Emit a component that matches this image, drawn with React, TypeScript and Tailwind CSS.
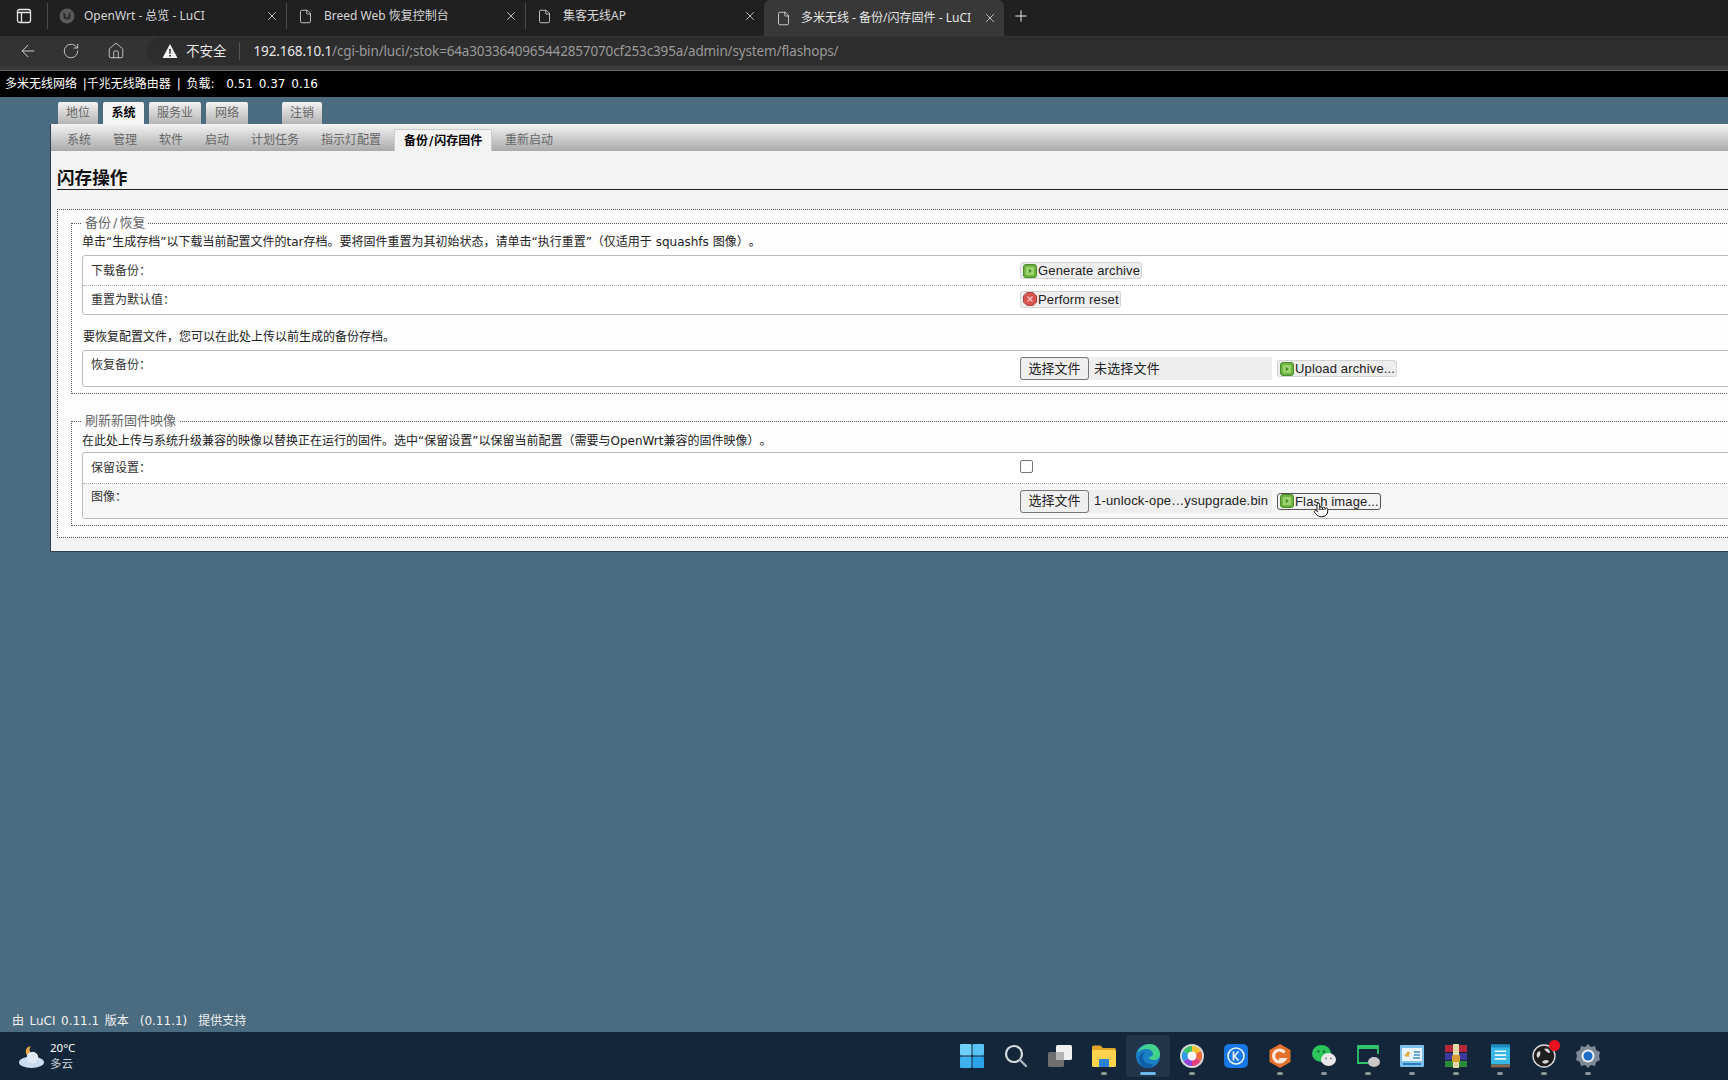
import React from 'react';
import { ArrowLeft, RotateCw, House, X, Plus, File, Pointer } from 'lucide-react';

const ui = "font-['Noto_Sans','Noto_Sans_CJK_SC',sans-serif]";
const page = "font-['DejaVu_Sans','Noto_Sans_CJK_SC',sans-serif]";
const arial = "font-['Liberation_Sans','Noto_Sans_CJK_SC',sans-serif]";

const browserTabs = [
  { title: 'OpenWrt - 总览 - LuCI', fav: true },
  { title: 'Breed Web 恢复控制台' },
  { title: '集客无线AP' },
];

const GreenIcon = () => (
  <svg viewBox="0 0 14 14" className="w-[14px] h-[14px] shrink-0">
    <rect x="0.5" y="0.5" width="13" height="13" rx="2.5" fill="#6db33f" stroke="#4b8a2a" />
    <rect x="3" y="3" width="8" height="8" rx="1" fill="#9ed46f" />
    <path d="M5.8 4.8 L8.8 7 L5.8 9.2 Z" fill="#3f8a2a" />
  </svg>
);

const RedIcon = () => (
  <svg viewBox="0 0 14 14" className="w-[14px] h-[14px] shrink-0">
    <path d="M4 .5h6L13.5 4v6L10 13.5H4L.5 10V4Z" fill="#d9534f" stroke="#a94442" />
    <path d="M4.5 4.5l5 5M9.5 4.5l-5 5" stroke="#f4c4c2" strokeWidth="1.3" />
  </svg>
);

const ActionBtn = ({ label, red, hover, children }: { label: string; red?: boolean; hover?: boolean; children?: React.ReactNode }) => (
  <div className={`relative inline-flex items-center h-[17px] pl-[2px] pr-[1px] gap-[1px] rounded-[3px] border text-[13px] leading-none tracking-[0.15px] text-[#222] ${arial} ${hover ? 'bg-[#f3f3f3] border-[#555]' : 'bg-[#eeeeee] border-[#d4d4d4]'}`}>
    {red ? <RedIcon /> : <GreenIcon />}
    <span>{label}</span>
    {children}
  </div>
);

const FileInput = ({ value }: { value: string }) => (
  <div className={`flex items-center h-[23px] w-[252px] bg-[#eeeeee] text-[13px] text-[#222] ${arial}`}>
    <div className="w-[69px] h-full flex items-center justify-center bg-[#efefef] border border-[#767676] rounded-[3px] text-[13px]">选择文件</div>
    <span className="pl-[5px] truncate tracking-[0.17px]">{value}</span>
  </div>
);

const Row = ({ label, h, dotted, bg, pt, children }: { label: string; h: string; dotted?: boolean; bg?: string; pt?: string; children: React.ReactNode }) => (
  <div className={`flex ${h} ${bg ?? ''} ${dotted ? 'border-b border-dotted border-[#aaa]' : ''}`}>
    <div className={`w-[937px] pl-[8px] text-[12px] leading-[18px] text-[#333] ${pt ?? 'pt-[6px]'}`}>{label}</div>
    <div className="flex-1 flex items-center gap-[5px]">{children}</div>
  </div>
);

const Table = ({ children }: { children: React.ReactNode }) => (
  <div className="ml-[10px] bg-white border border-[#bbbbbb] rounded-[3px]">{children}</div>
);

const Legend = ({ children }: { children: React.ReactNode }) => (
  <legend className="ml-[10px] px-[3px] h-[18px] text-[13px] leading-[18px] text-[#666]">{children}</legend>
);

const Tb = ({ children, dot = true, active }: { children: React.ReactNode; dot?: boolean; active?: boolean }) => (
  <div className={`relative w-[44px] h-[42px] flex items-center justify-center rounded-[4px] ${active ? 'bg-[#22344a]' : ''}`}>
    {children}
    {dot && <div className={`absolute bottom-[2px] left-1/2 -translate-x-1/2 h-[3px] rounded-full ${active ? 'w-[16px] bg-[#6cb8e6]' : 'w-[6px] bg-[#8c949c]'}`} />}
  </div>
);

const sub = ['系统', '管理', '软件', '启动', '计划任务', '指示灯配置'];

export default function App() {
  return (
    <div className={`h-screen w-full overflow-hidden flex flex-col bg-[#4b6b80] ${page}`}>
      {/* browser chrome */}
      <div className={`h-9 bg-[#202020] flex items-start shrink-0 text-[#d6d6d6] ${ui}`}>
        <div className="w-[47px] h-8 flex items-center justify-center">
          <svg viewBox="0 0 16 16" className="w-4 h-4" fill="none" stroke="#e6e6e6" strokeWidth="1.3">
            <rect x="1.5" y="1.5" width="13" height="13" rx="2" />
            <path d="M1.5 4.5h13M5.5 4.5v10" />
          </svg>
        </div>
        {browserTabs.map((t) => (
          <div key={t.title} className="w-[239px] flex items-center border-l border-[#4a4a4a] mt-[3px] h-[26px] pl-[11px] pr-[7px] text-[12px]">
            {t.fav ? (
              <svg viewBox="0 0 16 16" className="w-4 h-4 shrink-0">
                <circle cx="8" cy="8" r="7.5" fill="#5a5a5a" />
                <path d="M4.5 4v4a3.5 3.5 0 0 0 7 0V4l-2 2v2a1.5 1.5 0 0 1-3 0V6Z" fill="#2a2a2a" />
              </svg>
            ) : (
              <File size={15} strokeWidth={1.3} className="shrink-0 text-[#e0e0e0]" />
            )}
            <span className={`flex-1 truncate ${t.fav ? 'pl-[9px]' : 'pl-[11px]'}`}>{t.title}</span>
            <X size={14} strokeWidth={1.4} className="text-[#ddd] shrink-0" />
          </div>
        ))}
        <div className="w-[240px] h-9 bg-[#383838] rounded-t-[6px] flex items-center pl-[12px] pr-[7px] text-[12px] text-[#e6e6e6]">
          <File size={15} strokeWidth={1.3} className="shrink-0" />
          <span className="pl-[10px] flex-1 truncate">多米无线 - 备份/闪存固件 - LuCI</span>
          <X size={14} strokeWidth={1.4} className="shrink-0" />
        </div>
        <div className="ml-[8px] h-8 flex items-center">
          <Plus size={18} strokeWidth={1.3} className="text-[#eee]" />
        </div>
      </div>

      <div className={`h-[35px] shrink-0 bg-[#333333] border-b border-[#666] text-[#d0d0d0] ${ui}`}>
        <div className="h-[30px] flex items-center">
          <ArrowLeft size={20} strokeWidth={1.2} className="ml-[18px]" />
          <RotateCw size={18} strokeWidth={1.2} className="ml-[24px]" />
          <House size={18} strokeWidth={1.2} className="ml-[27px]" />
          <div className="ml-[22px] h-[28px] flex-1 rounded-l-full bg-[#2d2d2d] flex items-center pl-[15px] text-[13.5px]">
            <svg viewBox="0 0 16 16" className="w-4 h-4 shrink-0">
              <path d="M8 1 15.5 15H.5Z" fill="#f2f2f2" />
              <path d="M7.2 6h1.6l-.2 5H7.4ZM7.2 12h1.6v1.5H7.2Z" fill="#2a2a2a" />
            </svg>
            <span className="ml-[8px] text-[#e6e6e6]">不安全</span>
            <div className="ml-[12px] w-px h-[18px] bg-[#555]" />
            <span className="ml-[14px] text-[#e8e8e8] tracking-[-0.15px]">192.168.10.1</span>
            <span className="text-[#9a9a9a] tracking-[-0.15px]">/cgi-bin/luci/;stok=64a3033640965442857070cf253c395a/admin/system/flashops/</span>
          </div>
        </div>
        <div className="h-1 bg-[#3b3b3b]" />
      </div>

      {/* router page header */}
      <div className="h-[26px] shrink-0 bg-black text-white text-[12px] flex items-center pl-[5px] whitespace-pre [word-spacing:2px]">
        多米无线网络 |千兆无线路由器 | 负载:  0.51 0.37 0.16
      </div>

      <div className="flex-1 flex flex-col min-h-0">
        <div className="pt-[5px] pl-[58px] flex h-[27px] shrink-0 text-[12px] text-[#666]">
          {[['地位', 'w-[40px]'], ['系统', 'w-[41px]'], ['服务业', 'w-[52px]'], ['网络', 'w-[42px]']].map(([t, w]) => (
            <div key={t} className={`${w} mr-[5px] h-[22px] flex items-center justify-center rounded-t-[2px] ${t === '系统' ? 'bg-[#f5f5f5] text-black font-bold' : 'bg-gradient-to-b from-[#f2f2f2] to-[#b4b4b4]'}`}>{t}</div>
          ))}
          <div className="ml-[29px] w-[40px] h-[22px] flex items-center justify-center rounded-t-[2px] bg-gradient-to-b from-[#f2f2f2] to-[#b4b4b4]">注销</div>
        </div>

        <div className="ml-[50px] w-[1760px] h-[428px] shrink-0 bg-[#f3f3f3] border-l border-b border-[#2e3e4a]">
          <div className="h-[27px] bg-gradient-to-b from-[#f4f4f4] to-[#aaaaaa] flex items-end pl-[16px] text-[12px] text-[#666]">
            {sub.map((s) => (
              <div key={s} className="h-[23px] flex items-center mr-[22px]">{s}</div>
            ))}
            <div className="h-[22px] -ml-[9px] w-[98px] flex items-center justify-center bg-[#f3f3f3] border-t border-x border-[#ccc] font-bold text-black">备份<span className="mx-[1px]">/</span>闪存固件</div>
            <div className="h-[23px] flex items-center ml-[13px]">重新启动</div>
          </div>

          <div className="pl-[6px]">
            <h2 className="h-[39px] pt-[15px] border-b border-[#222] text-[17.6px] leading-[24px] font-bold text-[#111]">闪存操作</h2>

            <div className="mt-[19px] border border-dotted border-[#555] bg-[#fdfdfd] pl-[13px] pt-[4px] h-[329px]">
              <fieldset className="border border-dotted border-[#555]">
                <Legend>备份<span className="mx-[2px]">/</span>恢复</Legend>
                <p className="ml-[10px] mt-[1px] text-[12px] leading-[18px] text-[#222] [text-spacing-trim:space-all]">单击“生成存档”以下载当前配置文件的tar存档。要将固件重置为其初始状态，请单击“执行重置”（仅适用于 squashfs 图像）。</p>
                <div className="mt-[4px]">
                  <Table>
                    <Row label="下载备份：" h="h-[30px]" dotted>
                      <ActionBtn label="Generate archive" />
                    </Row>
                    <Row label="重置为默认值：" h="h-[28px]" pt="pt-[5px]">
                      <div className="flex mb-[2px]">
                        <ActionBtn label="Perform reset" red />
                      </div>
                    </Row>
                  </Table>
                </div>
                <p className="ml-[11px] mt-[13px] mb-[4px] text-[12px] leading-[18px] text-[#222]">要恢复配置文件，您可以在此处上传以前生成的备份存档。</p>
                <Table>
                  <Row label="恢复备份：" h="h-[35px]" pt="pt-[5px]">
                    <FileInput value="未选择文件" />
                    <ActionBtn label="Upload archive..." />
                  </Row>
                </Table>
                <div className="h-[6px]" />
              </fieldset>

              <fieldset className="mt-[18px] border border-dotted border-[#555]">
                <Legend>刷新新固件映像</Legend>
                <p className="ml-[10px] mt-[2px] text-[12px] leading-[18px] text-[#222] [text-spacing-trim:space-all]">在此处上传与系统升级兼容的映像以替换正在运行的固件。选中“保留设置”以保留当前配置（需要与OpenWrt兼容的固件映像）。</p>
                <div className="mt-[2px]">
                  <Table>
                    <Row label="保留设置：" h="h-[31px]" dotted>
                      <div className="w-[13px] h-[13px] mb-[3px] bg-white border border-[#767676] rounded-[2px]" />
                    </Row>
                    <Row label="图像：" h="h-[34px]" bg="bg-[#f7f7f7]" pt="pt-[4px]">
                      <FileInput value="1-unlock-ope…ysupgrade.bin" />
                      <ActionBtn label="Flash image..." hover>
                        <Pointer size={16} strokeWidth={1.3} fill="#fff" className="absolute left-[35px] top-[8px] text-black" />
                      </ActionBtn>
                    </Row>
                  </Table>
                </div>
                <div className="h-[6px]" />
              </fieldset>
            </div>
          </div>
        </div>

        <div className="mt-auto h-[26px] shrink-0 pl-[12px] flex items-end text-[12px] text-[#f0f0f0] whitespace-pre [word-spacing:1.7px]">
          <span className="pb-[2px]">由 LuCI 0.11.1 版本  (0.11.1)  提供支持</span>
        </div>
      </div>

      {/* windows taskbar */}
      <div className={`h-12 shrink-0 bg-[#14273a] flex items-center text-white ${ui}`}>
        <div className="w-[950px] shrink-0 flex items-center pl-[18px]">
          <svg viewBox="0 0 28 26" className="w-[27px] h-[25px]">
            <circle cx="14" cy="8" r="6" fill="#e9a94a" />
            <circle cx="17" cy="6" r="5" fill="#14273a" />
            <ellipse cx="14" cy="19" rx="13" ry="6" fill="#c9dcf0" />
            <circle cx="15" cy="14" r="6" fill="#dfeaf6" />
          </svg>
          <div className="ml-[5px] text-[11.5px] leading-[16px]">
            <div>20°C</div>
            <div className="text-[#c8d0d8]">多云</div>
          </div>
        </div>
        <Tb dot={false}>
          <svg viewBox="0 0 24 24" className="w-6 h-6">
            <rect x="0" y="0" width="11.5" height="11.5" rx="1" fill="#6fd0fa" />
            <rect x="12.5" y="0" width="11.5" height="11.5" rx="1" fill="#58c2f5" />
            <rect x="0" y="12.5" width="11.5" height="11.5" rx="1" fill="#3fb0ee" />
            <rect x="12.5" y="12.5" width="11.5" height="11.5" rx="1" fill="#2ba3e8" />
          </svg>
        </Tb>
        <Tb dot={false}>
          <svg viewBox="0 0 24 24" className="w-6 h-6" fill="none">
            <circle cx="10" cy="10" r="8" stroke="#d8dde2" strokeWidth="2.2" />
            <path d="M16 16l6 6" stroke="#aab2ba" strokeWidth="2.4" strokeLinecap="round" />
          </svg>
        </Tb>
        <Tb dot={false}>
          <svg viewBox="0 0 24 24" className="w-6 h-6">
            <rect x="0" y="8" width="16" height="15" rx="1.5" fill="#6e6e6e" />
            <rect x="8" y="1" width="16" height="15" rx="1.5" fill="#f0f0f0" />
            <rect x="8" y="8" width="8" height="8" fill="#b4b4b4" />
          </svg>
        </Tb>
        <Tb>
          <svg viewBox="0 0 24 24" className="w-6 h-6">
            <path d="M0 3a1.5 1.5 0 0 1 1.5-1.5h7L11 4h11.5A1.5 1.5 0 0 1 24 5.5V8H0Z" fill="#e0a52a" />
            <rect x="0" y="6" width="24" height="17" rx="1.5" fill="#fbd34d" />
            <rect x="7" y="15" width="10" height="8" rx="1" fill="#2b7fd4" />
          </svg>
        </Tb>
        <Tb active>
          <svg viewBox="0 0 24 24" className="w-6 h-6">
            <circle cx="12" cy="12" r="12" fill="#1b7fc4" />
            <path d="M1 10C3 3 9 0 14 0c6 0 10 5 10 10 0 4-3 6-6 6-3 0-5-1-5-3 2 0 4-1 4-3 0-3-3-5-7-5-4 0-8 2-9 5Z" fill="#43d28e" />
            <path d="M13 24c-6 0-10-4-10-10 0-3 3-6 6-6 1 0-3 2-2 6 1 5 6 7 10 6-1 2-2 4-4 4Z" fill="#0f5ea8" />
          </svg>
        </Tb>
        <Tb>
          <svg viewBox="0 0 24 24" className="w-6 h-6">
            <circle cx="12" cy="12" r="12" fill="#d8d8d8" />
            <path d="M12 2a10 10 0 0 1 8.7 5L12 12Z" fill="#f4c430" />
            <path d="M20.7 7a10 10 0 0 1 0 10L12 12Z" fill="#f06a3a" />
            <path d="M20.7 17A10 10 0 0 1 12 22V12Z" fill="#e43d7a" />
            <path d="M12 22a10 10 0 0 1-8.7-5L12 12Z" fill="#8f45d8" />
            <path d="M3.3 17a10 10 0 0 1 0-10L12 12Z" fill="#2e9be8" />
            <path d="M3.3 7A10 10 0 0 1 12 2v10Z" fill="#3fc465" />
            <circle cx="12" cy="12" r="4.5" fill="#fff" />
          </svg>
        </Tb>
        <Tb dot={false}>
          <svg viewBox="0 0 24 24" className="w-6 h-6">
            <rect width="24" height="24" rx="5" fill="#1677e6" />
            <circle cx="12" cy="12" r="8" fill="none" stroke="#e8f2fc" strokeWidth="1.6" />
            <path d="M9.5 7.5v9M14.5 7.5l-4 4.5 4 4.5" fill="none" stroke="#e8f2fc" strokeWidth="1.8" />
          </svg>
        </Tb>
        <Tb>
          <svg viewBox="0 0 24 24" className="w-6 h-6">
            <path d="M12 0l10.5 6v12L12 24 1.5 18V6Z" fill="#e2702a" />
            <path d="M16.5 8.5A6 6 0 1 0 16.5 15.5H11" fill="none" stroke="#fbe8da" strokeWidth="3.2" />
          </svg>
        </Tb>
        <Tb>
          <svg viewBox="0 0 24 24" className="w-6 h-6">
            <ellipse cx="9.5" cy="9.5" rx="9.5" ry="8.5" fill="#2dc45a" />
            <ellipse cx="16.5" cy="15.5" rx="7.5" ry="6.5" fill="#e8e8e8" />
            <circle cx="6.5" cy="7.5" r="1.2" fill="#14733a" />
            <circle cx="12" cy="7.5" r="1.2" fill="#14733a" />
            <circle cx="14" cy="14.5" r="1" fill="#888" />
            <circle cx="19" cy="14.5" r="1" fill="#888" />
          </svg>
        </Tb>
        <Tb>
          <svg viewBox="0 0 24 24" className="w-6 h-6" fill="none">
            <path d="M12 19H2V2h20v8" stroke="#2fc46a" strokeWidth="1.8" />
            <path d="M2 2h20v3H2Z" fill="#2fc46a" />
            <ellipse cx="18" cy="18" rx="6" ry="5" fill="#c8c8c8" />
          </svg>
        </Tb>
        <Tb>
          <svg viewBox="0 0 24 24" className="w-6 h-6">
            <rect x="0" y="1" width="24" height="22" rx="1" fill="#7cc0ea" />
            <rect x="2" y="4" width="20" height="13" fill="#e8f4fb" />
            <path d="M4 12l4-5 3 3h-2v3Z" fill="#e0b040" />
            <path d="M14 8h6M14 11h6M13 14h7" stroke="#3c8ccc" strokeWidth="1.6" />
            <rect x="3" y="19" width="18" height="2" fill="#2c7cbc" />
          </svg>
        </Tb>
        <Tb>
          <svg viewBox="0 0 24 24" className="w-6 h-6">
            <rect x="1" y="1" width="22" height="7" fill="#b8263a" />
            <rect x="1" y="9" width="22" height="7" fill="#3c3a9a" />
            <rect x="1" y="17" width="22" height="6" fill="#2c8a3a" />
            <rect x="9" y="0" width="6" height="24" fill="#e6d9a8" />
            <rect x="8" y="11" width="8" height="7" rx="1" fill="#d8a030" />
          </svg>
        </Tb>
        <Tb>
          <svg viewBox="0 0 20 24" className="w-[19px] h-6">
            <rect x="0" y="0" width="20" height="21" fill="#38b6e6" />
            <path d="M0 0h20v3H0Z" fill="#1b8cc0" />
            <path d="M4 7h12M4 11h12M4 15h12" stroke="#e8f7fd" strokeWidth="1.8" />
            <rect x="0" y="21" width="20" height="3" fill="#8a6a4a" />
          </svg>
        </Tb>
        <Tb>
          <div className="relative">
            <svg viewBox="0 0 24 24" className="w-6 h-6" fill="none">
              <circle cx="12" cy="12" r="11" fill="#1e1e1e" stroke="#d8d8d8" strokeWidth="1.4" />
              <path d="M12 5a4 4 0 0 1 6 4c-3 0-4-2-6-4ZM6 14a4 4 0 0 1 2-7c1 3 0 5-2 7ZM17 17a4 4 0 0 1-7 1c2-2 4-3 7-1Z" fill="#d8d8d8" />
            </svg>
            <div className="absolute -top-[4px] -right-[4px] w-[11px] h-[11px] rounded-full bg-[#f01020]" />
          </div>
        </Tb>
        <Tb>
          <svg viewBox="0 0 24 24" className="w-6 h-6">
            <path d="M12 0l3 3 4-1 1 4 4 2-1 4 1 4-4 2-1 4-4-1-3 3-3-3-4 1-1-4-4-2 1-4-1-4 4-2 1-4 4 1Z" fill="#7d8a96" />
            <circle cx="12" cy="12" r="6.5" fill="#e8eef4" />
            <circle cx="12" cy="12" r="4.5" fill="#1c6cc4" />
          </svg>
        </Tb>
      </div>
    </div>
  );
}
